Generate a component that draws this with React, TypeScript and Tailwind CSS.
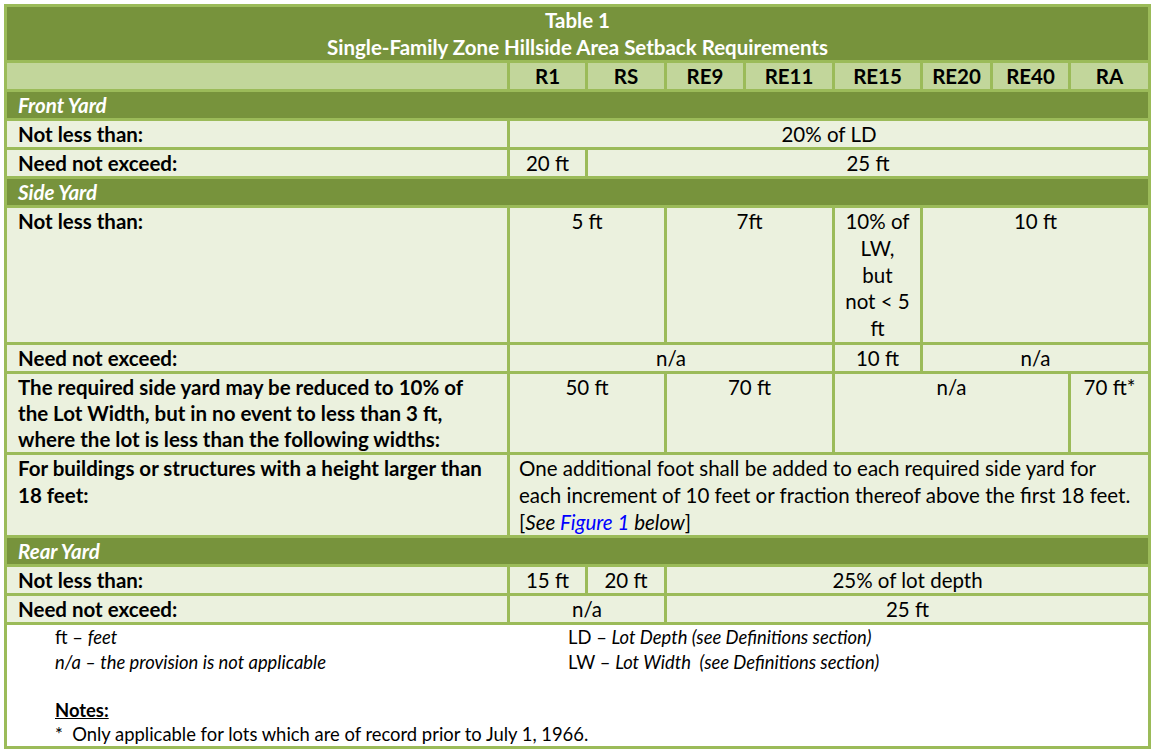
import React from "react";

const dark = "bg-[#77933c] text-white font-bold italic pl-[11px]";
const head = "bg-[#c2d69b] font-bold text-center";
const body = "bg-[#ebf1de]";
const label = "bg-[#ebf1de] font-bold pl-[11px]";
const val = "bg-[#ebf1de] text-center";

export default function App() {
  return (
    <div className="bg-white p-[4px] font-['Lato',sans-serif] text-[20.5px] leading-[26px] text-black">
      <div className="grid w-[1147px] grid-cols-[500px_75px_76px_76px_86px_85px_67px_75px_77px] gap-[3px] bg-[#9bbb59] p-[3px]">
        {/* Title */}
        <div className="col-span-9 bg-[#77933c] text-center font-bold leading-[26.5px] text-white">
          Table 1
          <br />
          Single-Family Zone Hillside Area Setback Requirements
        </div>

        {/* Zone header */}
        <div className="bg-[#c2d69b]" />
        {["R1", "RS", "RE9", "RE11", "RE15", "RE20", "RE40", "RA"].map((z) => (
          <div key={z} className={head}>
            {z}
          </div>
        ))}

        {/* Front Yard */}
        <div className={`col-span-9 ${dark}`}>Front Yard</div>
        <div className={label}>Not less than:</div>
        <div className={`col-span-8 ${val}`}>20% of LD</div>
        <div className={label}>Need not exceed:</div>
        <div className={val}>20 ft</div>
        <div className={`col-span-7 ${val}`}>25 ft</div>

        {/* Side Yard */}
        <div className={`col-span-9 ${dark}`}>Side Yard</div>
        <div className={label}>Not less than:</div>
        <div className={`col-span-2 ${val}`}>5 ft</div>
        <div className={`col-span-2 ${val}`}>7ft</div>
        <div className={`${val} leading-[26.8px]`}>
          10% of
          <br />
          LW,
          <br />
          but
          <br />
          not &lt; 5
          <br />
          ft
        </div>
        <div className={`col-span-3 ${val}`}>10 ft</div>

        <div className={label}>Need not exceed:</div>
        <div className={`col-span-4 ${val}`}>n/a</div>
        <div className={val}>10 ft</div>
        <div className={`col-span-3 ${val}`}>n/a</div>

        <div className={label}>
          The required side yard may be reduced to 10% of
          <br />
          the Lot Width, but in no event to less than 3 ft,
          <br />
          where the lot is less than the following widths:
        </div>
        <div className={`col-span-2 ${val}`}>50 ft</div>
        <div className={`col-span-2 ${val}`}>70 ft</div>
        <div className={`col-span-3 ${val}`}>n/a</div>
        <div className={val}>70 ft*</div>

        <div className={`${label} leading-[26.8px]`}>
          For buildings or structures with a height larger than
          <br />
          18 feet:
        </div>
        <div className={`col-span-8 ${body} pl-[9px] leading-[26.8px]`}>
          One additional foot shall be added to each required side yard for
          <br />
          each increment of 10 feet or fraction thereof above the first 18 feet.
          <br />[<i>See </i>
          <i className="text-[#0000ff]">Figure 1</i>
          <i> below</i>]
        </div>

        {/* Rear Yard */}
        <div className={`col-span-9 ${dark}`}>Rear Yard</div>
        <div className={label}>Not less than:</div>
        <div className={val}>15 ft</div>
        <div className={val}>20 ft</div>
        <div className={`col-span-6 ${val}`}>25% of lot depth</div>
        <div className={label}>Need not exceed:</div>
        <div className={`col-span-2 ${val}`}>n/a</div>
        <div className={`col-span-6 ${val}`}>25 ft</div>

        {/* Legend and notes */}
        <div className="col-span-9 grid grid-cols-[513px_1fr] bg-white pl-[48px] text-[18.4px] leading-[24.2px]">
          <div>
            ft – <i>feet</i>
          </div>
          <div>
            LD – <i>Lot Depth (see Definitions section)</i>
          </div>
          <div>
            <i>n/a – the provision is not applicable</i>
          </div>
          <div>
            LW – <i>Lot Width&nbsp; (see Definitions section)</i>
          </div>
          <div className="col-span-2 h-[24.2px]" />
          <div className="col-span-2 font-bold underline">Notes:</div>
          <div className="col-span-2">
            *&nbsp; Only applicable for lots which are of record prior to July 1, 1966.
          </div>
        </div>
      </div>
    </div>
  );
}
